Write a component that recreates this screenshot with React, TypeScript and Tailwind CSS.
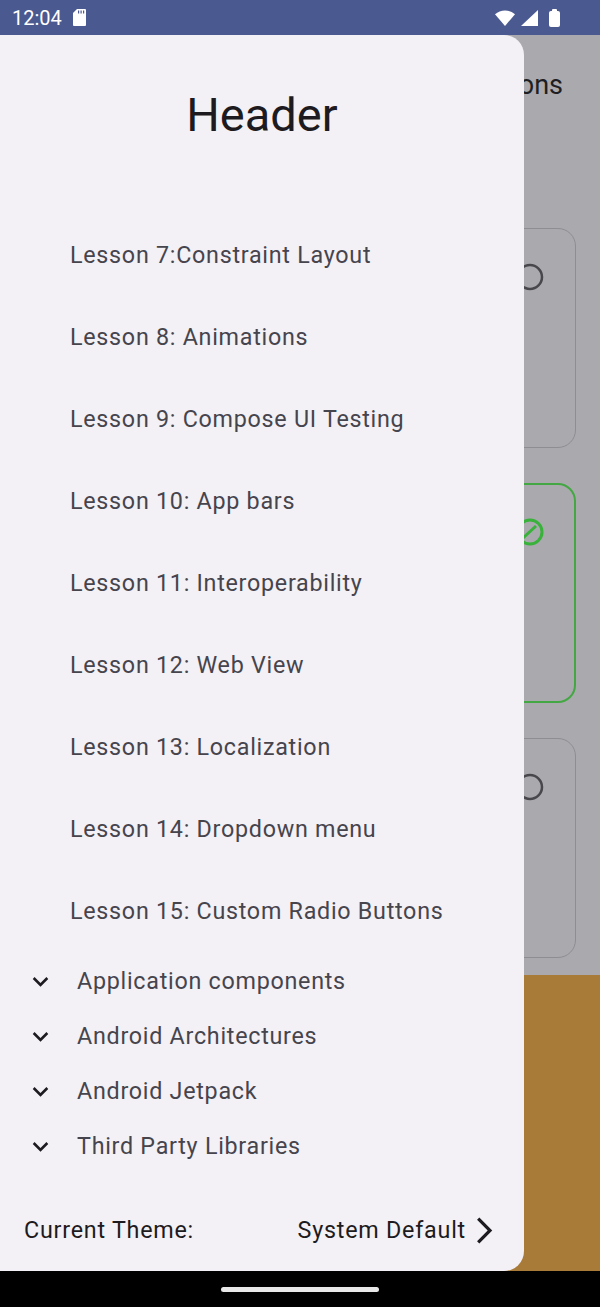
import React from "react";

const lessons = [
	"Lesson 7:Constraint Layout",
	"Lesson 8: Animations",
	"Lesson 9: Compose UI Testing",
	"Lesson 10: App bars",
	"Lesson 11: Interoperability",
	"Lesson 12: Web View",
	"Lesson 13: Localization",
	"Lesson 14: Dropdown menu",
	"Lesson 15: Custom Radio Buttons",
];

const groups = [
	"Application components",
	"Android Architectures",
	"Android Jetpack",
	"Third Party Libraries",
];

function StatusBar() {
	return (
		<div className="flex h-[35px] shrink-0 items-center justify-between bg-[#4a5a90] pl-[12px] pr-[40px] text-white">
			<div className="flex items-center gap-[11px]">
				<span className="text-[20px] leading-none">12:04</span>
				{/* sd card */}
				<svg width="13" height="17" viewBox="0 0 13 17">
					<path d="M4 0H12a1 1 0 0 1 1 1V16a1 1 0 0 1-1 1H1a1 1 0 0 1-1-1V4z" fill="white" />
					<rect x="5" y="1.5" width="1.2" height="3" fill="#4a5a90" />
					<rect x="7.5" y="1.5" width="1.2" height="3" fill="#4a5a90" />
					<rect x="10" y="1.5" width="1.2" height="3" fill="#4a5a90" />
				</svg>
			</div>
			<div className="flex items-center gap-[6px]">
				{/* wifi */}
				<svg width="20" height="16" viewBox="0 0 20 16">
					<path d="M10 16L0 4.2A15 15 0 0 1 20 4.2Z" fill="white" />
				</svg>
				{/* signal */}
				<svg width="17" height="16" viewBox="0 0 17 16">
					<path d="M17 0V16H0Z" fill="white" />
				</svg>
				<div className="ml-[5px] flex flex-col items-center">
					<div className="h-[2px] w-[5px] rounded-t-[1px] bg-white" />
					<div className="h-[16px] w-[11px] rounded-[2px] bg-white" />
				</div>
			</div>
		</div>
	);
}

function Radio({ selected }: { selected?: boolean }) {
	if (selected) {
		return (
			<svg width="28" height="28" viewBox="0 0 28 28">
				<circle cx="14" cy="14" r="12" fill="none" stroke="#38b23a" strokeWidth="3" />
				<path d="M7 20L20 8" stroke="#38b23a" strokeWidth="3" />
			</svg>
		);
	}
	return (
		<svg width="28" height="28" viewBox="0 0 28 28">
			<circle cx="14" cy="14" r="12" fill="none" stroke="#48474c" strokeWidth="2.5" />
		</svg>
	);
}

// the screen that sits under the drawer, already dimmed by the scrim
function BackgroundScreen() {
	return (
		<div className="flex h-full flex-col bg-[#aaa9ae]">
			<div className="flex h-[100px] items-center justify-end pr-[37px]">
				<span className="text-[27px] text-[#1f1e22]">Radio Buttons</span>
			</div>
			<div className="flex flex-col gap-[35px] px-[24px] pt-[93px]">
				<div className="flex h-[220px] justify-end rounded-[18px] border border-[#8e8d92] pr-[31px] pt-[34px]">
					<Radio />
				</div>
				<div className="flex h-[220px] justify-end rounded-[18px] border-2 border-[#43a843] pr-[30px] pt-[33px]">
					<Radio selected />
				</div>
				<div className="flex h-[220px] justify-end rounded-[18px] border border-[#8e8d92] pr-[31px] pt-[34px]">
					<Radio />
				</div>
			</div>
			<div className="mt-auto h-[296px] bg-[#a97b39]" />
		</div>
	);
}

function Drawer() {
	return (
		<div className="absolute bottom-0 left-0 top-0 flex w-[524px] flex-col rounded-r-[20px] bg-[#f3f0f6]">
			<div className="flex h-[179px] justify-center pt-[52px]">
				<span className="text-[47px] leading-[56px] text-[#1d1b20]">Header</span>
			</div>
			<div className="flex flex-col">
				{lessons.map((l) => (
					<div key={l} className="flex h-[82px] items-center pl-[70px]">
						<span className="text-[23.3px] tracking-[0.73px] text-[#46444c]">{l}</span>
					</div>
				))}
			</div>
			<div className="mt-[2px] flex flex-col">
				{groups.map((g) => (
					<div key={g} className="flex h-[55px] items-center gap-[21px] pl-[25px]">
						<svg width="31" height="31" viewBox="0 0 24 24">
							<path d="M16.59 8.59L12 13.17 7.41 8.59 6 10l6 6 6-6z" fill="#1d1b20" />
						</svg>
						<span className="text-[23.3px] tracking-[0.73px] text-[#46444c]">{g}</span>
					</div>
				))}
			</div>
			<div className="mt-auto mb-[13px] flex h-[56px] items-center justify-between pl-[24px] pr-[24px] text-[#1d1b20]">
				<span className="text-[23.3px] tracking-[0.77px]">Current Theme:</span>
				<div className="flex items-center gap-[3px]">
					<span className="text-[23.3px] tracking-[0.77px]">System Default</span>
					<svg width="31" height="31" viewBox="0 0 24 24">
						<path d="M6.23 20.23L8 22l10-10L8 2 6.23 3.77 14.46 12z" fill="#1d1b20" />
					</svg>
				</div>
			</div>
		</div>
	);
}

export default function App() {
	return (
		<div className="flex h-[1307px] w-[600px] flex-col overflow-hidden font-['Roboto',sans-serif]">
			<StatusBar />
			<div className="relative flex-1">
				<BackgroundScreen />
				<Drawer />
			</div>
			<div className="flex h-[36px] shrink-0 justify-center bg-black pt-[16px]">
				<div className="h-[5px] w-[158px] rounded-full bg-[#e8e8e8]" />
			</div>
		</div>
	);
}
